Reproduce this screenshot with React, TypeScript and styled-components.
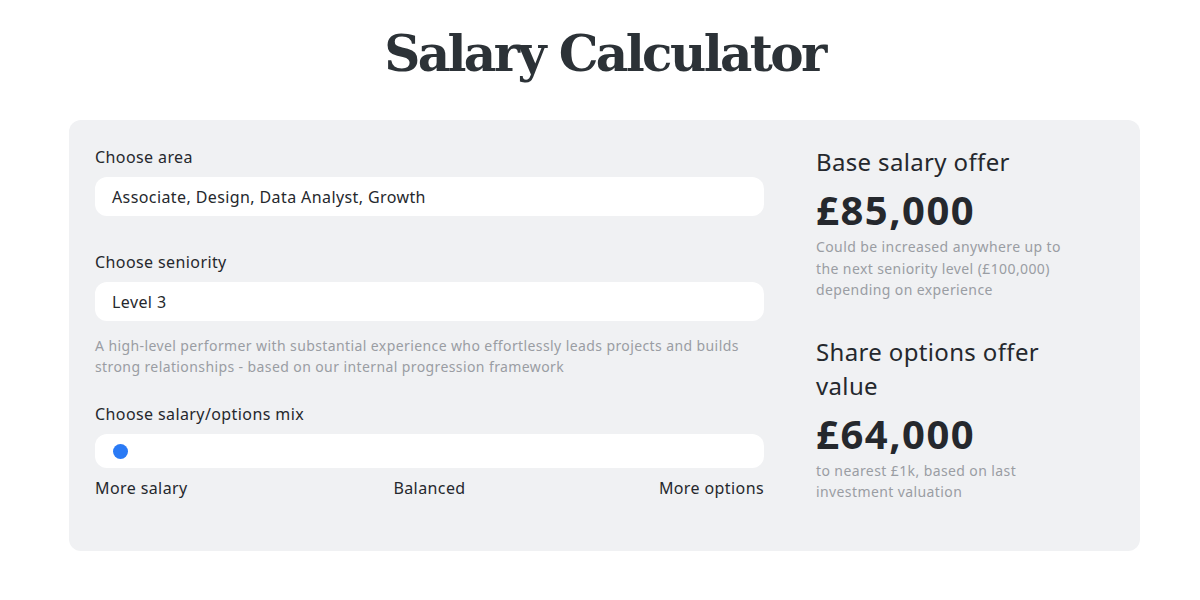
import styled, { createGlobalStyle } from 'styled-components';

const GlobalStyle = createGlobalStyle`
  body {
    margin: 0;
    background: #ffffff;
    font-family: 'Noto Sans', 'Lato', sans-serif;
    color: #25282d;
  }
`;

const Page = styled.div`
  width: 1200px;
  box-sizing: border-box;
  padding-left: 9px;
  display: flex;
  flex-direction: column;
  align-items: center;
`;

const Title = styled.h1`
  font-family: 'DejaVu Serif', 'Liberation Serif', serif;
  font-weight: 700;
  font-size: 50px;
  letter-spacing: -2.6px;
  line-height: 60px;
  color: #2c3237;
  margin: 24px 0 36px;
`;

const Card = styled.div`
  width: 1071px;
  box-sizing: border-box;
  background: #f0f1f3;
  border-radius: 12px;
  padding: 27px 26px 48px;
  display: grid;
  grid-template-columns: 669px 262px;
  column-gap: 52px;
  align-items: start;
`;

const Column = styled.div`
  display: flex;
  flex-direction: column;
  letter-spacing: 0.4px;
`;

const Label = styled.label<{ $gap?: number }>`
  font-size: 16px;
  line-height: 20px;
  margin-top: ${({ $gap }) => $gap ?? 0}px;
  margin-bottom: 10px;
`;

const Field = styled.div`
  height: 39px;
  background: #ffffff;
  border-radius: 12px;
  display: flex;
  align-items: center;
  padding: 0 17px;
  font-size: 16px;
`;

const Hint = styled.p`
  margin: 14px 0 0;
  font-size: 14px;
  line-height: 21px;
  color: #9a9da3;
`;

const Track = styled.div`
  height: 34px;
  background: #ffffff;
  border-radius: 12px;
  display: flex;
  align-items: center;
  padding: 0 18px;
`;

const Thumb = styled.span`
  width: 15px;
  height: 15px;
  border-radius: 50%;
  background: #2a7af5;
`;

const Scale = styled.div`
  margin-top: 10px;
  display: grid;
  grid-template-columns: 1fr auto 1fr;
  font-size: 16px;
  line-height: 20px;

  span:nth-child(2) {
    text-align: center;
  }
  span:last-child {
    text-align: right;
  }
`;

const OfferTitle = styled.h2<{ $gap?: number }>`
  margin: ${({ $gap }) => $gap ?? 0}px 0 0;
  font-size: 24px;
  font-weight: 400;
  line-height: 34px;
  letter-spacing: 0.35px;
`;

const Amount = styled.div`
  margin-top: 9px;
  font-size: 40px;
  font-weight: 700;
  line-height: 44px;
  letter-spacing: 1.5px;
`;

const Note = styled.p`
  margin: 4px 0 0;
  font-size: 14px;
  line-height: 21.5px;
  color: #9a9da3;
`;

export default function App() {
  return (
    <>
      <GlobalStyle />
      <Page>
        <Title>Salary Calculator</Title>
        <Card>
          <Column>
            <Label>Choose area</Label>
            <Field>Associate, Design, Data Analyst, Growth</Field>
            <Label $gap={36}>Choose seniority</Label>
            <Field>Level 3</Field>
            <Hint>
              A high-level performer with substantial experience who effortlessly leads projects and builds
              strong relationships - based on our internal progression framework
            </Hint>
            <Label $gap={27}>Choose salary/options mix</Label>
            <Track>
              <Thumb />
            </Track>
            <Scale>
              <span>More salary</span>
              <span>Balanced</span>
              <span>More options</span>
            </Scale>
          </Column>
          <Column>
            <OfferTitle $gap={-2}>Base salary offer</OfferTitle>
            <Amount>£85,000</Amount>
            <Note>
              Could be increased anywhere up to the next seniority level (£100,000) depending on experience
            </Note>
            <OfferTitle $gap={34}>Share options offer value</OfferTitle>
            <Amount>£64,000</Amount>
            <Note>to nearest £1k, based on last investment valuation</Note>
          </Column>
        </Card>
      </Page>
    </>
  );
}
